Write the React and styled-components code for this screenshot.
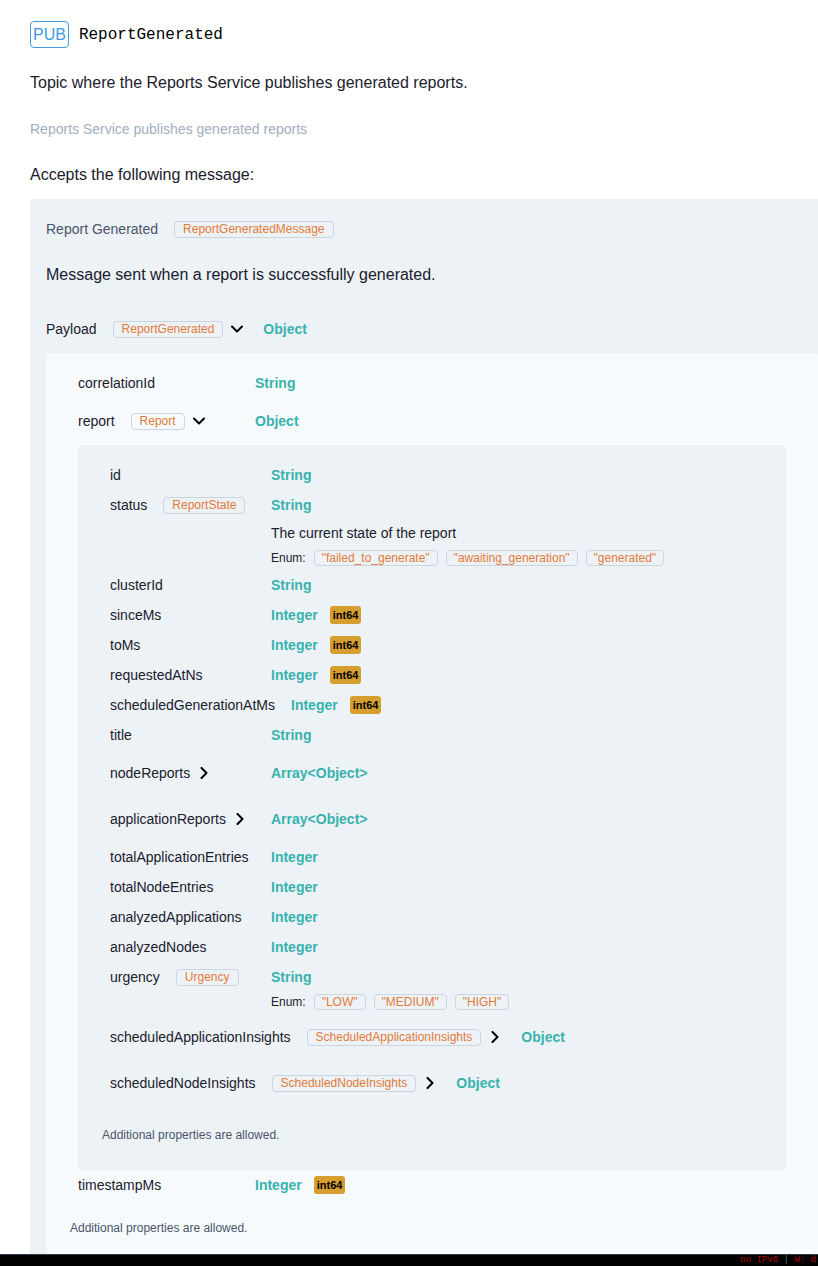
import styled, { createGlobalStyle } from 'styled-components'

const GlobalStyle = createGlobalStyle`
  html, body {
    margin: 0;
    padding: 0;
    background: #ffffff;
    overflow: hidden;
  }
  body {
    font-family: "Liberation Sans", Arial, sans-serif;
    color: #1a202c;
  }
  * { box-sizing: border-box; }
`

const Page = styled.div`
  padding: 21px 0 0 30px;
  height: 1266px;
  overflow: hidden;
`

const Header = styled.div`
  display: flex;
  align-items: center;
  height: 27px;
`

const OpBadge = styled.span`
  display: inline-block;
  border: 1px solid #4299e1;
  border-radius: 4px;
  color: #4299e1;
  font-size: 16px;
  line-height: 25px;
  padding: 0 2px;
  text-transform: uppercase;
`

const ChannelName = styled.span`
  margin-left: 10px;
  font-family: "Liberation Mono", "DejaVu Sans Mono", monospace;
  font-size: 16px;
  color: #000;
`

const Lead = styled.p`
  margin: ${p => p.$top}px 0 0;
  font-size: 16px;
  line-height: 24px;
  color: #1a202c;
`

const Summary = styled.p`
  margin: 24px 0 0;
  font-size: 14px;
  line-height: 20px;
  color: #a0aec0;
`

const MessagePanel = styled.div`
  margin: 12px -16px 0 0;
  padding: 20px 16px 16px;
  background: #edf2f7;
  border-radius: 4px;
`

const MessageTitle = styled.div`
  display: flex;
  align-items: center;
  font-size: 14px;
  line-height: 20px;
  color: #4a5568;
`

const PayloadBlock = styled.div`
  margin-top: 19px;
`

const SchemaBadge = styled.span`
  display: inline-block;
  margin-left: 16px;
  padding: 0 8px;
  border: 1px solid #cbd5e0;
  border-radius: 4px;
  font-size: 12px;
  line-height: 15px;
  color: #e27b37;
  white-space: nowrap;
`

const Prop = styled.div``

const Row = styled.div`
  display: flex;
  align-items: flex-start;
  font-size: 14px;
`

const NameCol = styled.div`
  min-width: 25%;
  padding-right: 16px;
  height: ${p => (p.$tall ? 46 : 30)}px;
  display: flex;
  align-items: center;
  color: #1a202c;
  white-space: nowrap;
`

const TypeCol = styled.div`
  display: flex;
  flex-direction: column;
`

const TypeLine = styled.div`
  height: ${p => (p.$tall ? 46 : 30)}px;
  display: flex;
  align-items: center;
`

const TypeName = styled.span`
  font-weight: bold;
  color: #38b2ac;
`

const FormatBadge = styled.span`
  margin-left: 12px;
  padding: 0 3px;
  background: #d69e2e;
  border-radius: 3px;
  font-size: 11px;
  font-weight: bold;
  line-height: 18px;
  color: #000;
`

const Toggle = styled.button`
  margin-left: 4px;
  width: 20px;
  height: 20px;
  padding: 0;
  border: 0;
  background: none;
  display: flex;
  align-items: center;
  justify-content: center;
  cursor: pointer;
`

const Desc = styled.div`
  margin: 3px 0 5px;
  font-size: 14px;
  line-height: 20px;
  color: #1a202c;
`

const EnumLine = styled.div`
  display: flex;
  align-items: center;
  gap: 8px;
  height: 20px;
  margin-bottom: 2px;
  font-size: 12px;
  color: #1a202c;
`

const EnumValue = styled.span`
  padding: 0 7px;
  border: 1px solid #cbd5e0;
  border-radius: 4px;
  line-height: 14px;
  color: #e27b37;
`

const SchemaPanel = styled.div`
  margin-top: 1px;
  padding: 15px 32px ${p => p.$bottom}px;
  background: ${p => (p.$light ? '#f7fafc' : '#edf2f7')};
  border-radius: 4px;
`

const Additional = styled.div`
  margin: ${p => p.$top}px 0 0 -8px;
  font-size: 12px;
  line-height: 16px;
  color: #4a5568;
`

const StatusBar = styled.div`
  position: fixed;
  left: 0;
  right: 0;
  bottom: 0;
  height: 12px;
  background: #000;
  border-top: 1px solid #2c3e50;
  display: flex;
  justify-content: flex-end;
`

const StatusText = styled.div`
  padding-right: 2px;
  white-space: nowrap;
  font-family: "Liberation Mono", "DejaVu Sans Mono", monospace;
  font-size: 9px;
  line-height: 11px;
  color: #b30000;
`

const Sep = styled.span`
  color: #666;
`

function ChevronDown() {
  return (
    <svg width="12" height="8" viewBox="0 0 12 8" fill="none">
      <path d="M1 1.5 L6 6.5 L11 1.5" stroke="#000" strokeWidth="2" strokeLinecap="round" strokeLinejoin="round" />
    </svg>
  )
}

function ChevronRight() {
  return (
    <svg width="8" height="12" viewBox="0 0 8 12" fill="none">
      <path d="M1.5 1 L6.5 6 L1.5 11" stroke="#000" strokeWidth="2" strokeLinecap="round" strokeLinejoin="round" />
    </svg>
  )
}

const int = (name) => ({ name, type: 'Integer', format: 'int64' })

const reportProps = [
  { name: 'id', type: 'String' },
  {
    name: 'status',
    badge: 'ReportState',
    type: 'String',
    desc: 'The current state of the report',
    enums: ['"failed_to_generate"', '"awaiting_generation"', '"generated"'],
  },
  { name: 'clusterId', type: 'String' },
  int('sinceMs'),
  int('toMs'),
  int('requestedAtNs'),
  int('scheduledGenerationAtMs'),
  { name: 'title', type: 'String' },
  { name: 'nodeReports', type: 'Array<Object>', expand: 'right' },
  { name: 'applicationReports', type: 'Array<Object>', expand: 'right' },
  { name: 'totalApplicationEntries', type: 'Integer' },
  { name: 'totalNodeEntries', type: 'Integer' },
  { name: 'analyzedApplications', type: 'Integer' },
  { name: 'analyzedNodes', type: 'Integer' },
  { name: 'urgency', badge: 'Urgency', type: 'String', enums: ['"LOW"', '"MEDIUM"', '"HIGH"'] },
  { name: 'scheduledApplicationInsights', badge: 'ScheduledApplicationInsights', type: 'Object', expand: 'right' },
  { name: 'scheduledNodeInsights', badge: 'ScheduledNodeInsights', type: 'Object', expand: 'right' },
]

function Property({ p, children }) {
  const tall = !!p.expand
  return (
    <Prop>
      <Row>
        <NameCol $tall={tall}>
          {p.name}
          {p.badge && <SchemaBadge>{p.badge}</SchemaBadge>}
          {p.expand && <Toggle>{p.expand === 'down' ? <ChevronDown /> : <ChevronRight />}</Toggle>}
        </NameCol>
        <TypeCol>
          <TypeLine $tall={tall}>
            <TypeName>{p.type}</TypeName>
            {p.format && <FormatBadge>{p.format}</FormatBadge>}
          </TypeLine>
          {p.desc && <Desc>{p.desc}</Desc>}
          {p.enums && (
            <EnumLine>
              Enum:
              {p.enums.map(e => <EnumValue key={e}>{e}</EnumValue>)}
            </EnumLine>
          )}
        </TypeCol>
      </Row>
      {children}
    </Prop>
  )
}

export default function App() {
  return (
    <>
      <GlobalStyle />
      <Page>
        <Header>
          <OpBadge>pub</OpBadge>
          <ChannelName>ReportGenerated</ChannelName>
        </Header>
        <Lead $top={23}>Topic where the Reports Service publishes generated reports.</Lead>
        <Summary>Reports Service publishes generated reports</Summary>
        <Lead $top={24}>Accepts the following message:</Lead>

        <MessagePanel>
          <MessageTitle>
            Report Generated
            <SchemaBadge>ReportGeneratedMessage</SchemaBadge>
          </MessageTitle>
          <Lead $top={24}>Message sent when a report is successfully generated.</Lead>

          <PayloadBlock>
            <Property p={{ name: 'Payload', badge: 'ReportGenerated', type: 'Object', expand: 'down' }}>
              <SchemaPanel $light $bottom={40}>
                <Property p={{ name: 'correlationId', type: 'String' }} />
                <Property p={{ name: 'report', badge: 'Report', type: 'Object', expand: 'down' }}>
                  <SchemaPanel $bottom={27}>
                    {reportProps.map(rp => <Property key={rp.name} p={rp} />)}
                    <Additional $top={21}>Additional properties are allowed.</Additional>
                  </SchemaPanel>
                </Property>
                <Property p={int('timestampMs')} />
                <Additional $top={20}>Additional properties are allowed.</Additional>
              </SchemaPanel>
            </Property>
          </PayloadBlock>
        </MessagePanel>
      </Page>
      <StatusBar>
        <StatusText>
          no IPv6 <Sep>|</Sep> W: d
        </StatusText>
      </StatusBar>
    </>
  )
}
